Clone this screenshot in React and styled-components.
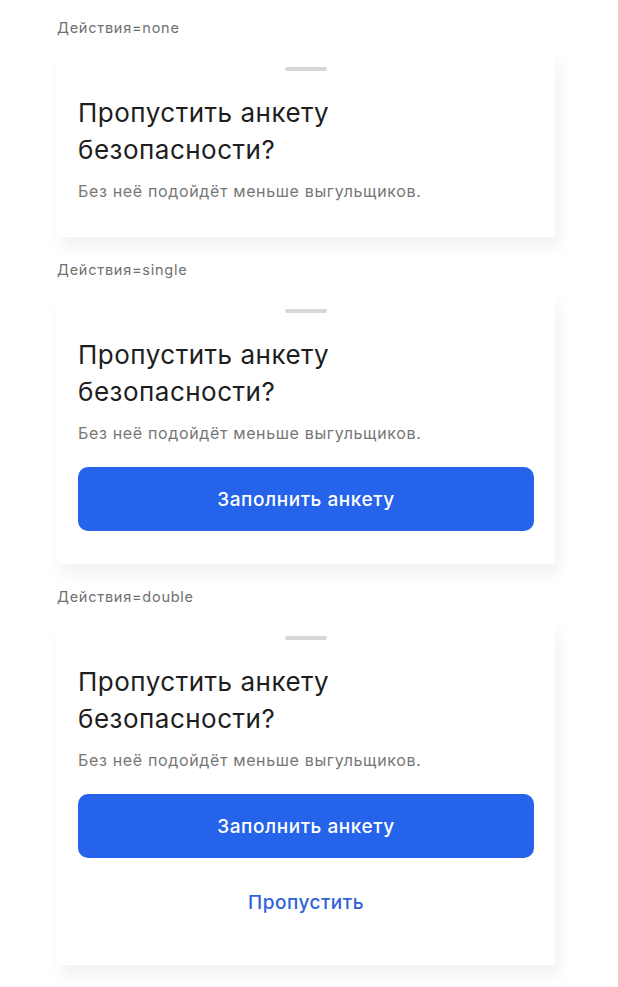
import React from "react";
import styled, { createGlobalStyle } from "styled-components";

const GlobalStyle = createGlobalStyle`
  html, body {
    margin: 0;
    padding: 0;
    background: #ffffff;
  }
  body {
    font-family: Inter, "Noto Sans", sans-serif;
    -webkit-font-smoothing: antialiased;
  }
`;

const Page = styled.div`
  display: flex;
  flex-direction: column;
  padding: 19px 0 0 57px;
  width: 498px;
`;

const Variant = styled.section`
  display: flex;
  flex-direction: column;
  gap: 15px;
  margin-bottom: 24px;
`;

const Label = styled.div`
  font-size: 14.5px;
  line-height: 18px;
  letter-spacing: 0.75px;
  color: #6f6f6f;
`;

const Sheet = styled.div`
  background: #fff;
  padding: 15px 21px ${(p) => p.$bottom}px;
  box-shadow: 4px 10px 16px rgba(0, 0, 0, 0.06);
  display: flex;
  flex-direction: column;
`;

const Handle = styled.div`
  align-self: center;
  width: 42px;
  height: 4px;
  border-radius: 2px;
  background: #d7d7d3;
  margin-bottom: 23px;
`;

const Title = styled.h2`
  margin: 0;
  font-size: 26px;
  line-height: 37px;
  font-weight: 400;
  color: #1e1e1e;
  letter-spacing: 0.5px;
`;

const Text = styled.p`
  margin: 11px 0 0;
  font-size: 16px;
  line-height: 24px;
  letter-spacing: 0.65px;
  color: #767676;
`;

const PrimaryButton = styled.button`
  margin-top: 22px;
  height: 64px;
  border: none;
  border-radius: 10px;
  background: #2563eb;
  color: #fff;
  font-family: inherit;
  font-size: 19px;
  font-weight: 500;
  letter-spacing: 0.55px;
  cursor: pointer;
`;

const LinkButton = styled.button`
  margin-top: 24px;
  height: 40px;
  border: none;
  background: none;
  color: #2f62d8;
  font-family: inherit;
  font-size: 19px;
  font-weight: 500;
  letter-spacing: 0.5px;
  cursor: pointer;
`;

const Sheets = [
  { name: "none", actions: 0, bottom: 34 },
  { name: "single", actions: 1, bottom: 33 },
  { name: "double", actions: 2, bottom: 43 },
];

const App = () => (
  <>
    <GlobalStyle />
    <Page>
      {Sheets.map((s) => (
        <Variant key={s.name}>
          <Label>Действия={s.name}</Label>
          <Sheet $bottom={s.bottom}>
            <Handle />
            <Title>
              Пропустить анкету
              <br />
              безопасности?
            </Title>
            <Text>Без неё подойдёт меньше выгульщиков.</Text>
            {s.actions > 0 && <PrimaryButton>Заполнить анкету</PrimaryButton>}
            {s.actions > 1 && <LinkButton>Пропустить</LinkButton>}
          </Sheet>
        </Variant>
      ))}
    </Page>
  </>
);

export default App;
